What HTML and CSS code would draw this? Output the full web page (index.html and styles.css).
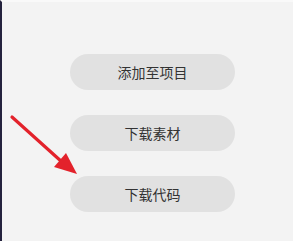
FILE: index.html
```html
<!DOCTYPE html>
<html lang="zh">
<head>
<meta charset="utf-8">
<link rel="stylesheet" href="styles.css">
</head>
<body>
<div class="panel">
  <div class="actions">
    <button class="btn">添加至项目</button>
    <button class="btn">下载素材</button>
    <button class="btn">下载代码</button>
  </div>
  <svg class="arrow" width="90" height="80" viewBox="0 0 90 80">
    <line x1="12" y1="17" x2="62" y2="62" stroke="#e3222b" stroke-width="3.2" stroke-linecap="round"/>
    <polygon points="77,74 54,67 66,53" fill="#e3222b"/>
  </svg>
</div>
</body>
</html>
```
FILE: styles.css
```css
html, body {
  margin: 0;
  padding: 0;
  width: 293px;
  height: 241px;
  overflow: hidden;
}
body {
  background: #f3f3f3;
  font-family: "Noto Sans CJK SC", "Noto Sans", sans-serif;
}
.panel {
  position: relative;
  box-sizing: border-box;
  width: 293px;
  height: 241px;
  border-left: 2px solid #24223d;
  border-top: 2px solid #f9f9f9;
}
.actions {
  display: flex;
  flex-direction: column;
  gap: 25px;
  padding-top: 52px;
  padding-left: 68px;
}
.btn {
  width: 165px;
  height: 36px;
  border: none;
  border-radius: 18px;
  background: #e1e1e1;
  color: #333;
  font-family: inherit;
  font-size: 14px;
  padding: 0;
  line-height: 36px;
}
.arrow {
  position: absolute;
  left: -2px;
  top: 98px;
}
```
